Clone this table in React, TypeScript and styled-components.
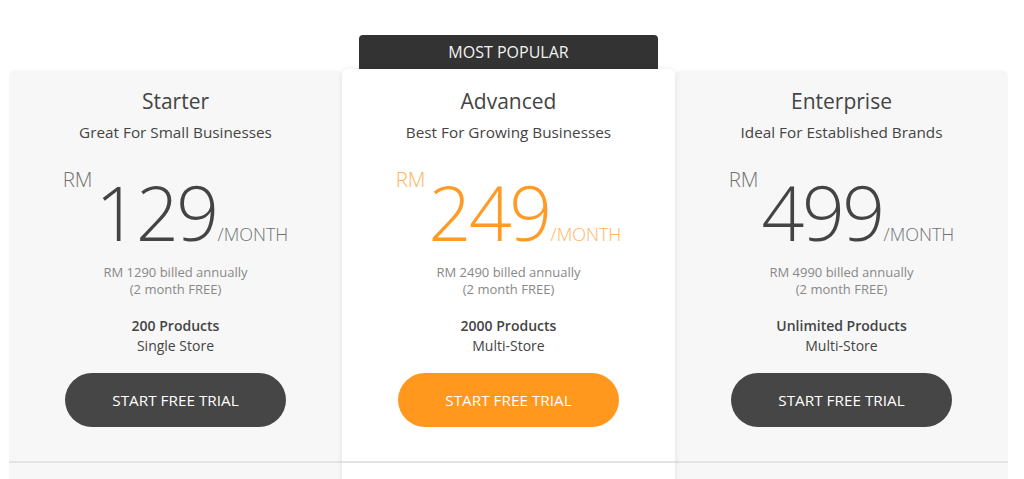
import React from 'react'
import styled, { createGlobalStyle } from 'styled-components';

const Colors = {
    Dark: '#444444',
    Muted: '#888888',
    Orange: '#ff981d',
    OrangeText: '#ff9a26',
    CardBg: '#f7f7f7',
    Badge: '#333333',
    Divider: '#e4e4e4',
};

type Plan = {
    name: string;
    tagline: string;
    price: number;
    annual: number;
    products: string;
    store: string;
    featured?: boolean;
};

const plans: Plan[] = [
    { name: 'Starter', tagline: 'Great For Small Businesses', price: 129, annual: 1290, products: '200 Products', store: 'Single Store' },
    { name: 'Advanced', tagline: 'Best For Growing Businesses', price: 249, annual: 2490, products: '2000 Products', store: 'Multi-Store', featured: true },
    { name: 'Enterprise', tagline: 'Ideal For Established Brands', price: 499, annual: 4990, products: 'Unlimited Products', store: 'Multi-Store' },
];

const GlobalStyle = createGlobalStyle`
    html, body {
        margin: 0;
        padding: 0;
        background: #ffffff;
        overflow: hidden;
    }
    body {
        font-family: "Open Sans", "Noto Sans", sans-serif;
        color: ${Colors.Dark};
    }
`;

const App: React.FC<{}> = () => {
    return (
        <>
            <GlobalStyle />
            <Page>
                <Plans>
                    {plans.map((plan) => (
                        <Column key={plan.name} $featured={!!plan.featured}>
                            {plan.featured && <Badge>Most Popular</Badge>}
                            <Card $featured={!!plan.featured}>
                                <Title>{plan.name}</Title>
                                <Tagline>{plan.tagline}</Tagline>
                                <PriceRow $featured={!!plan.featured}>
                                    <Currency>RM</Currency>
                                    <Amount>{plan.price}</Amount>
                                    <Period>/MONTH</Period>
                                </PriceRow>
                                <Billing>
                                    RM {plan.annual} billed annually<br />
                                    (2 month FREE)
                                </Billing>
                                <Features>
                                    <strong>{plan.products}</strong>
                                    <span>{plan.store}</span>
                                </Features>
                                <TrialButton $featured={!!plan.featured}>Start Free Trial</TrialButton>
                                <FeatureList />
                            </Card>
                        </Column>
                    ))}
                </Plans>
            </Page>
        </>
    )
}

const Page = styled.div`
    width: 1024px;
    height: 479px;
    padding: 35px 0 0 9px;
    box-sizing: border-box;
`;
const Plans = styled.div`
    display: grid;
    grid-template-columns: repeat(3, 333px);
    align-items: start;
`;
const Column = styled.div<{ $featured: boolean }>`
    display: flex;
    flex-direction: column;
    align-items: center;
    margin-top: ${({ $featured }) => ($featured ? '0' : '35px')};
    position: relative;
    z-index: ${({ $featured }) => ($featured ? 2 : 1)};
`;
const Badge = styled.div`
    width: 299px;
    height: 34px;
    display: flex;
    justify-content: center;
    align-items: center;
    background: ${Colors.Badge};
    color: #f2f2f2;
    border-radius: 4px 4px 0 0;
    font-size: 16px;
    text-transform: uppercase;
`;
const Card = styled.div<{ $featured: boolean }>`
    width: 333px;
    box-sizing: border-box;
    display: flex;
    flex-direction: column;
    align-items: center;
    padding-top: ${({ $featured }) => ($featured ? '19px' : '18px')};
    background: ${({ $featured }) => ($featured ? '#ffffff' : Colors.CardBg)};
    border-radius: 6px 6px 0 0;
    box-shadow: ${({ $featured }) => ($featured ? '0 0 6px rgba(0, 0, 0, 0.09)' : 'none')};
    text-align: center;
`;
const Title = styled.div`
    font-size: 21px;
    line-height: 27px;
    color: ${Colors.Dark};
`;
const Tagline = styled.div`
    margin-top: 7px;
    font-size: 15.3px;
    line-height: 20px;
    color: ${Colors.Dark};
`;
const PriceRow = styled.div<{ $featured: boolean }>`
    display: flex;
    justify-content: center;
    align-items: baseline;
    margin-top: 32px;
    font-weight: 300;
    color: ${({ $featured }) => ($featured ? Colors.OrangeText : Colors.Dark)};
`;
const Currency = styled.span`
    align-self: flex-start;
    margin-top: -5px;
    margin-right: 3px;
    font-size: 20.5px;
    line-height: 20px;
    opacity: 0.75;
`;
const Amount = styled.span`
    font-size: 75px;
    line-height: 77px;
    letter-spacing: -2.5px;
`;
const Period = styled.span`
    margin-left: 1px;
    font-size: 18px;
    opacity: 0.75;
`;
const Billing = styled.div`
    margin-top: 13px;
    font-size: 13px;
    line-height: 17px;
    color: ${Colors.Muted};
`;
const Features = styled.div`
    display: flex;
    flex-direction: column;
    margin-top: 18px;
    font-size: 14px;
    line-height: 20px;
    color: ${Colors.Dark};
        strong {
            font-weight: 600;
        }
`;
const TrialButton = styled.button<{ $featured: boolean }>`
    width: 221px;
    height: 54px;
    margin-top: 17px;
    border: none;
    border-radius: 27px;
    background: ${({ $featured }) => ($featured ? Colors.Orange : '#464646')};
    color: #ffffff;
    font-family: "Open Sans", "Noto Sans", sans-serif;
    font-size: 15.3px;
    text-transform: uppercase;
    cursor: pointer;
`;
const FeatureList = styled.div`
    align-self: stretch;
    height: 60px;
    margin-top: 34px;
    border-top: 2px solid ${Colors.Divider};
`;

export default App
